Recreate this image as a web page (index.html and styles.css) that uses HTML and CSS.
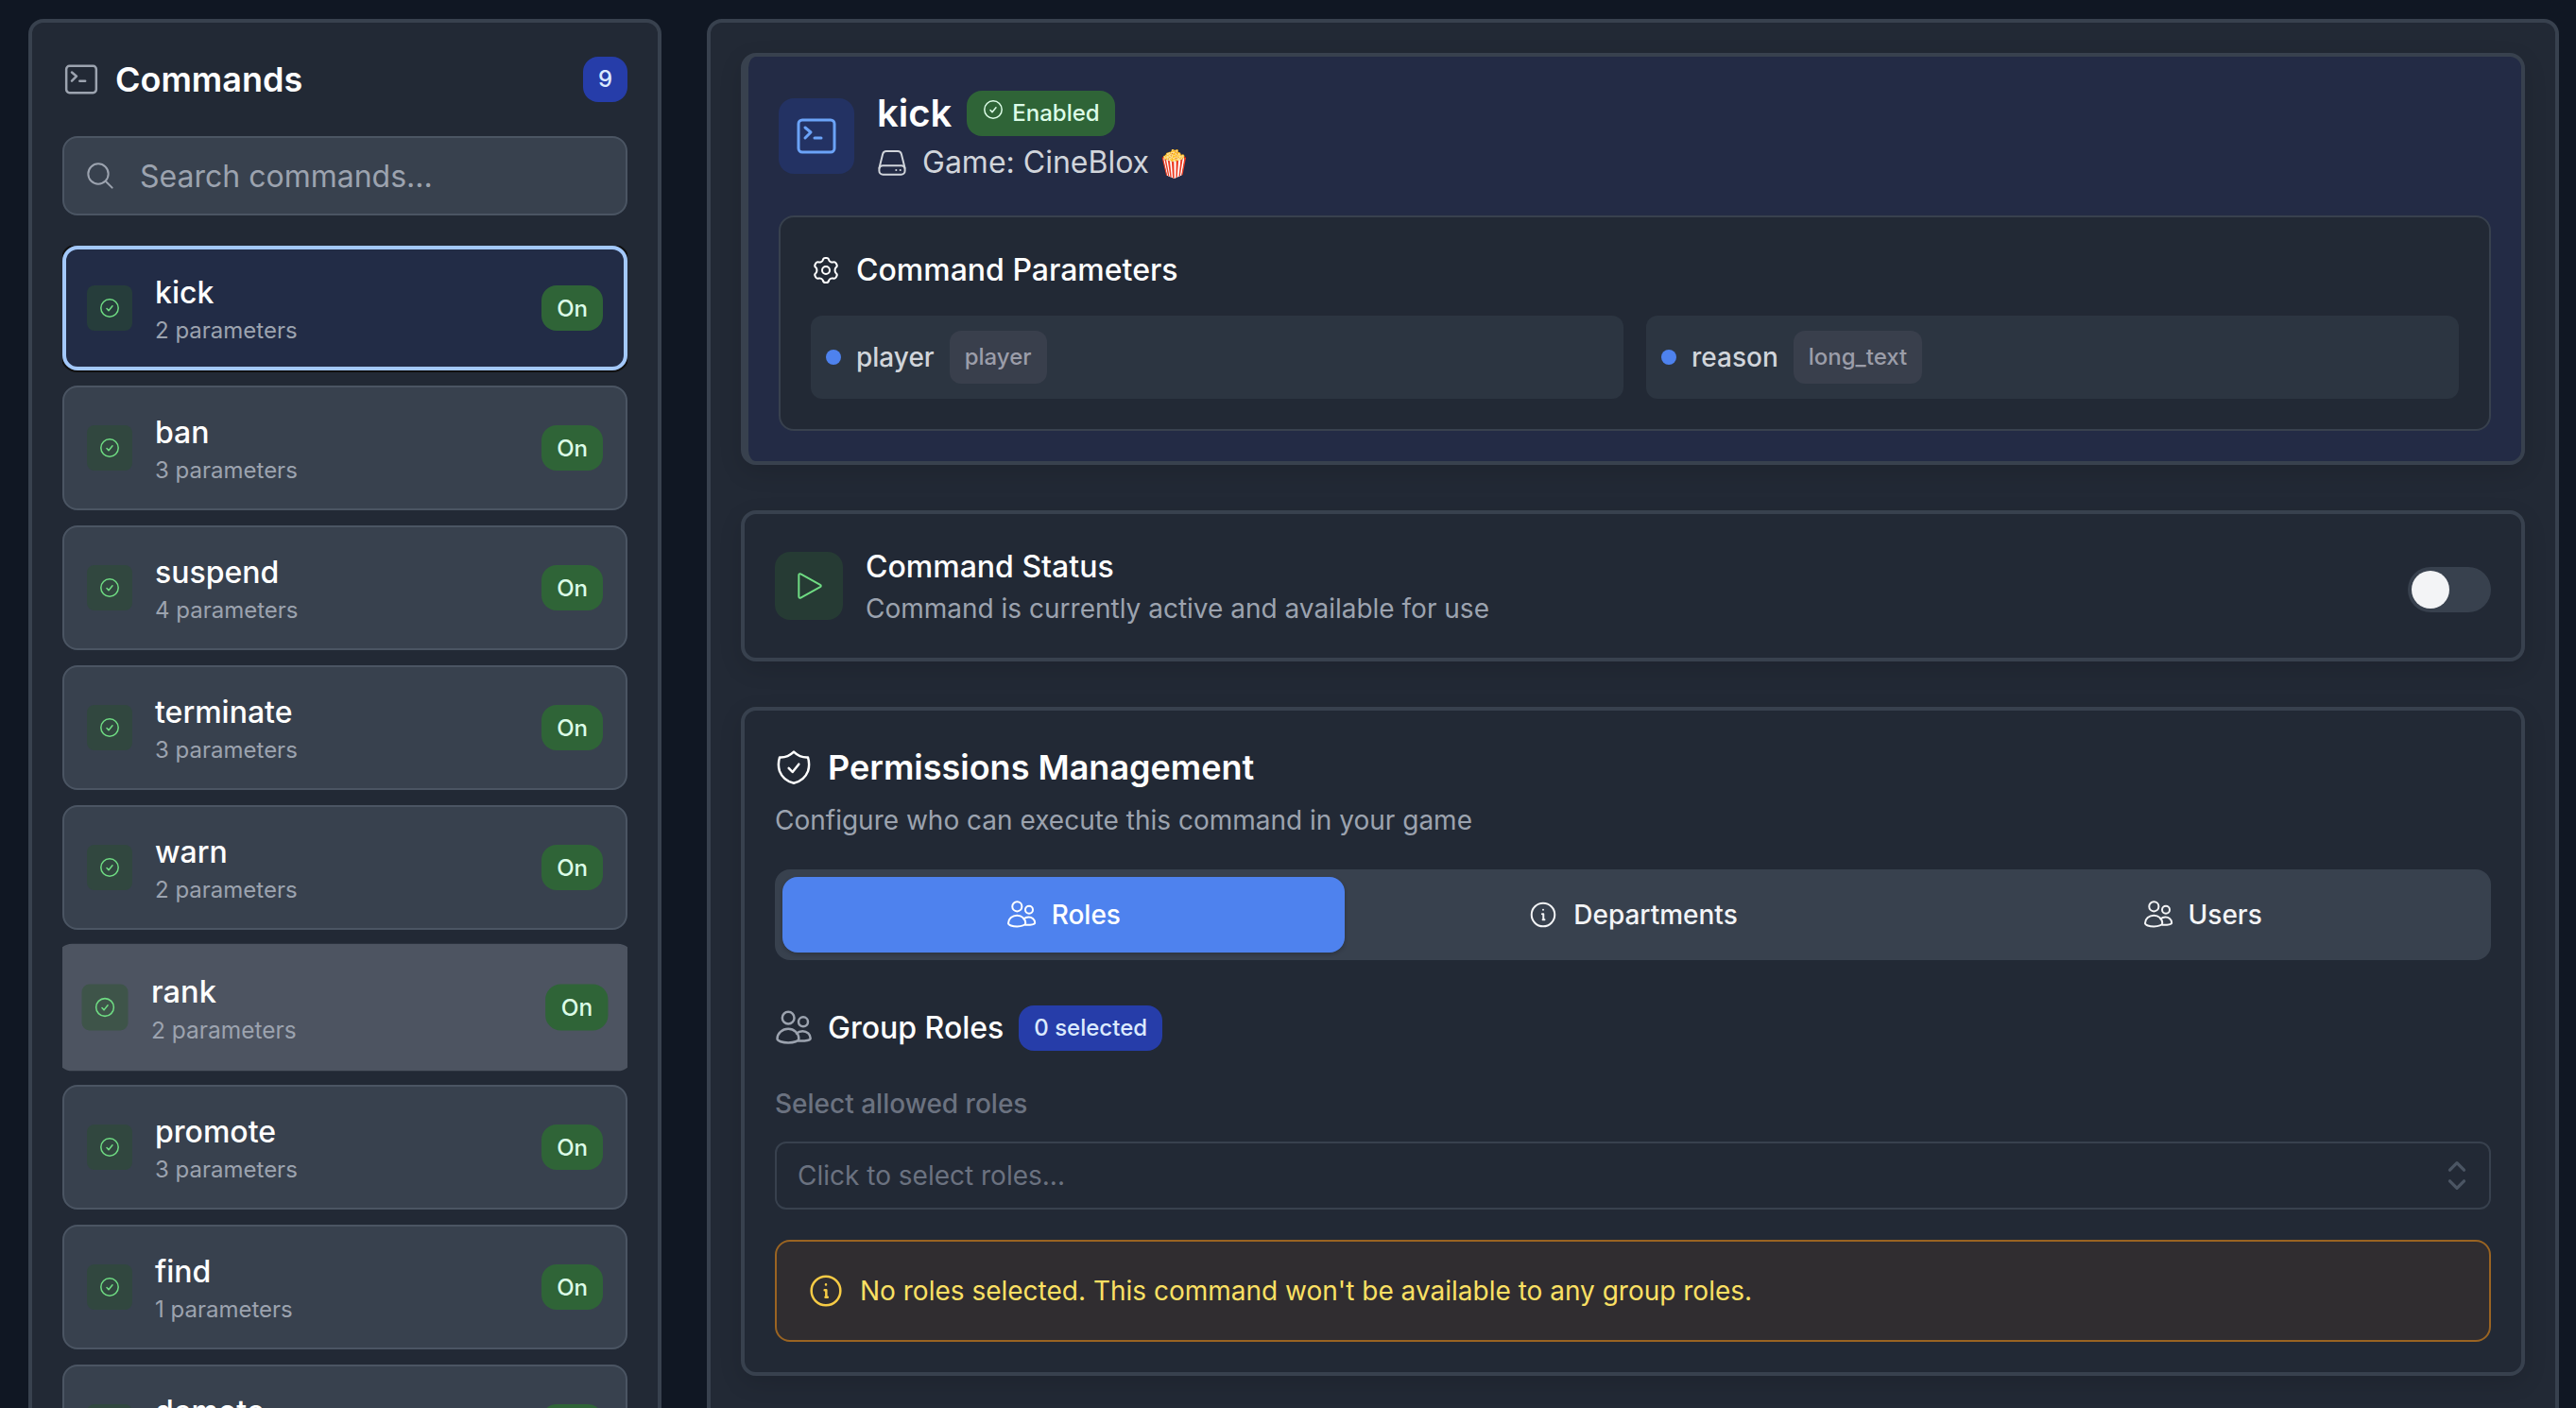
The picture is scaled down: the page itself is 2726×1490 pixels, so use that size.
FILE: index.html
```html
<!DOCTYPE html>
<html lang="en">
<head>
<meta charset="UTF-8">
<meta name="viewport" content="width=device-width, initial-scale=1.0">
<title>Commands</title>
<link rel="stylesheet" href="styles.css">
</head>
<body>

<!-- Icon sprite -->
<svg class="sprite" aria-hidden="true">
    <symbol id="i-terminal" viewBox="0 0 24 24"><rect x="2.5" y="3.5" width="19" height="17" rx="2"/><path d="M6 7.5l3 2.5-3 3M11 13h3.5"/></symbol>
    <symbol id="i-search" viewBox="0 0 24 24"><circle cx="10.5" cy="10.5" r="8"/><path d="M16.5 16.5l5 5"/></symbol>
    <symbol id="i-check" viewBox="0 0 24 24"><circle cx="12" cy="12" r="9.2"/><path d="M9 12.500l2 2.300 4-5"/></symbol>
    <symbol id="i-drive" viewBox="0 0 24 24"><path d="M1.800 16.500L4.600 5.200A3 3 0 0 1 7.500 3h9a3 3 0 0 1 2.900 2.200l2.800 11.300"/><rect x="1.800" y="14.500" width="20.400" height="7" rx="3"/><path d="M15.200 18h.1M18.500 18h.1"/></symbol>
    <symbol id="i-gear" viewBox="0 0 24 24"><circle cx="12" cy="12" r="3"/><path d="M9.600 3.900c.2-1 .9-1.700 1.900-1.700h1c1 0 1.700.7 1.900 1.700.1.700.7 1.200 1.300 1.500.6.300 1.300.4 1.900.2 1-.4 1.900 0 2.400.8l.5.900c.5.900.3 1.900-.5 2.500-.5.500-.8 1.100-.8 1.800v.8c0 .7.3 1.300.8 1.800.8.600 1 1.600.5 2.500l-.5.900c-.5.800-1.400 1.200-2.400.8-.6-.2-1.300-.1-1.900.2-.6.300-1.200.8-1.300 1.500-.2 1-.9 1.700-1.900 1.700h-1c-1 0-1.700-.7-1.900-1.700-.1-.7-.7-1.200-1.300-1.500-.6-.3-1.300-.4-1.900-.2-1 .4-1.900 0-2.400-.8l-.5-.9c-.5-.9-.3-1.900.5-2.500.5-.5.8-1.100.8-1.800v-.8c0-.7-.3-1.300-.8-1.800-.8-.6-1-1.600-.5-2.500l.5-.9c.5-.8 1.400-1.200 2.400-.8.600.2 1.300.1 1.900-.2.600-.3 1.200-.8 1.300-1.500z"/></symbol>
    <symbol id="i-play" viewBox="0 0 24 24"><path d="M4 3.500v17a1 1 0 0 0 1.500.9l15.500-8.500a1 1 0 0 0 0-1.800L5.500 2.600A1 1 0 0 0 4 3.500z"/></symbol>
    <symbol id="i-shield" viewBox="0 0 24 24"><path d="M12 2.200c2.500 2.400 5.700 3.700 9 3.500.9 3 .9 6 0 8.800-1.400 3.700-4.600 6.500-9 7.600-4.400-1.100-7.600-3.900-9-7.600-.9-2.800-.9-5.800 0-8.800 3.300.2 6.500-1.100 9-3.500z"/><path d="M8.800 12.500l2.400 2.500 4-5"/></symbol>
    <symbol id="i-users" viewBox="0 0 24 24"><circle cx="8.500" cy="5.500" r="3.800"/><circle cx="18" cy="8" r="3"/><path d="M8.500 12.500c3.700 0 6.700 2.800 6.700 6.300 0 1.400-3 2.500-6.700 2.500s-7-1.100-7-2.500c0-3.500 3.200-6.300 7-6.300z"/><path d="M13.800 15.400c1-1 2.300-1.500 3.800-1.500 2.800 0 5 2 5 4.500 0 1.200-2.800 1.900-7.600 1.700"/></symbol>
    <symbol id="i-info" viewBox="0 0 24 24"><circle cx="12" cy="12" r="9.2"/><path d="M12 8v.1M11.200 11.500h1v4.200M11.700 16h1.400"/></symbol>
    <symbol id="i-updown" viewBox="0 0 24 24"><path d="M7.500 8.500L12 4l4.500 4.500M7.500 15.500L12 20l4.500-4.500"/></symbol>
</svg>

<div class="page">

<aside class="panel sidebar">
    <div class="sidebar-header">
        <svg class="icon icon-lg muted"><use href="#i-terminal"/></svg>
        <h1>Commands</h1>
        <span class="badge badge-blue">9</span>
    </div>

    <div class="search">
        <svg class="icon"><use href="#i-search"/></svg>
        <input type="text" id="search" placeholder="Search commands..." aria-label="Search commands">
    </div>

    <div class="command-list" id="commandList"></div>
</aside>

<main class="panel content">
    <section class="card hero">
        <div class="hero-top">
            <div class="hero-icon"><svg class="icon icon-xl"><use href="#i-terminal"/></svg></div>
            <div>
                <div class="hero-title">
                    <h2>kick</h2>
                    <span class="badge badge-green"><svg class="icon icon-sm"><use href="#i-check"/></svg>Enabled</span>
                </div>
                <div class="hero-game"><svg class="icon"><use href="#i-drive"/></svg><span>Game: CineBlox <span class="emoji">🍿</span></span></div>
            </div>
        </div>
        <div class="params">
            <h3><svg class="icon"><use href="#i-gear"/></svg>Command Parameters</h3>
            <div class="params-grid">
                <div class="param"><span class="dot"></span>player<span class="param-type">player</span></div>
                <div class="param"><span class="dot"></span>reason<span class="param-type">long_text</span></div>
            </div>
        </div>
    </section>

    <section class="card status">
        <div class="status-icon"><svg class="icon"><use href="#i-play"/></svg></div>
        <div class="status-text">
            <h3><label for="enabled">Command Status</label></h3>
            <p>Command is currently active and available for use</p>
        </div>
        <input type="checkbox" class="switch" id="enabled" role="switch">
    </section>

    <section class="card permissions">
        <h2><svg class="icon icon-lg"><use href="#i-shield"/></svg>Permissions Management</h2>
        <p>Configure who can execute this command in your game</p>

        <div class="tabs" role="tablist">
            <button class="tab active" role="tab" aria-selected="true"><svg class="icon"><use href="#i-users"/></svg>Roles</button>
            <button class="tab" role="tab"><svg class="icon"><use href="#i-info"/></svg>Departments</button>
            <button class="tab" role="tab"><svg class="icon"><use href="#i-users"/></svg>Users</button>
        </div>

        <div class="group-header">
            <svg class="icon icon-lg muted"><use href="#i-users"/></svg>
            <h3>Group Roles</h3>
            <span class="badge badge-blue">0 selected</span>
        </div>

        <label class="field-label" for="roles">Select allowed roles</label>
        <div class="select-wrap">
            <select id="roles">
                <option>Click to select roles...</option>
            </select>
            <svg class="icon icon-lg"><use href="#i-updown"/></svg>
        </div>

        <div class="alert">
            <svg class="icon icon-lg"><use href="#i-info"/></svg>
            No roles selected. This command won't be available to any group roles.
        </div>
    </section>
</main>

</div>

<script>
const commands = [
    { name: 'kick', params: 2, state: 'selected' },
    { name: 'ban', params: 3 },
    { name: 'suspend', params: 4 },
    { name: 'terminate', params: 3 },
    { name: 'warn', params: 2 },
    { name: 'rank', params: 2, state: 'hovered' },
    { name: 'promote', params: 3 },
    { name: 'find', params: 1 },
    { name: 'demote', params: 3 }
];

document.getElementById('commandList').innerHTML = commands.map(cmd => `
    <button class="command ${cmd.state || ''}">
        <span class="command-icon"><svg class="icon icon-sm"><use href="#i-check"/></svg></span>
        <span class="command-text">
            <span class="command-name">${cmd.name}</span>
            <span class="command-params">${cmd.params} parameters</span>
        </span>
        <span class="badge badge-green">On</span>
    </button>`).join('');
</script>

</body>
</html>
```
FILE: styles.css
```css
* { box-sizing: border-box; }
body { margin: 0; height: 100vh; overflow: hidden; background: #101723; color: #fff; font-family: Inter, "Noto Color Emoji", sans-serif; font-size: 28px; line-height: 40px; }
h1, h2, h3, p { margin: 0; }
h1, h2 { font-size: 36px; line-height: 56px; font-weight: 600; }
h3 { font-size: 32px; line-height: 48px; font-weight: 500; }
p { color: #9ca3af; }
button, input, select { font-family: inherit; color: inherit; }

.sprite { position: absolute; width: 0; height: 0; }
.icon { width: 32px; height: 32px; flex: none; fill: none; stroke: currentColor; stroke-width: 1.5; stroke-linecap: round; stroke-linejoin: round; }
.icon-sm { width: 24px; height: 24px; }
.icon-lg { width: 40px; height: 40px; }
.icon-xl { width: 48px; height: 48px; }
.muted { color: #9ca3af; }

.page { display: flex; gap: 48px; padding: 20px 18px 0 30px; }
.panel { min-height: 100vh; padding: 32px; background: #222935; border: 4px solid #38414e; border-radius: 16px; }
.sidebar { flex: 0 0 670px; }
.content { flex: 1; min-width: 0; display: flex; flex-direction: column; gap: 48px; }

.badge { display: inline-flex; align-items: center; height: 48px; padding: 0 16px; border-radius: 16px; font-size: 24px; font-weight: 500; }
.badge-blue { background: #263da9; color: #dbeafe; }
.badge-green { background: #2f6437; color: #dcfce7; }

/* Sidebar */
.sidebar-header { display: flex; align-items: center; gap: 16px; margin-bottom: 32px; }
.sidebar-header .badge { margin-left: auto; }
.search { position: relative; margin-bottom: 32px; }
.search .icon { position: absolute; left: 24px; top: 26px; color: #9ca3af; }
.search input { display: block; width: 100%; height: 84px; padding: 0 24px 0 80px; font-size: 32px; background: #38414e; border: 2px solid #4b5563; border-radius: 16px; }
.search input::placeholder { color: #9ca3af; }
.command-list { display: flex; flex-direction: column; gap: 16px; overflow: hidden; }
.command { display: flex; align-items: center; gap: 24px; width: 100%; padding: 24px; background: #38414e; border: 2px solid #4b5563; border-radius: 16px; text-align: left; }
.command.selected { padding: 22px; background: #222c46; border: 4px solid #a3c8fa; box-shadow: 0 0 0 2px #101010; }
.command.hovered { background: #4d5461; border-color: #4d5461; transform: scale(1.02); }
.command-icon { display: flex; align-items: center; justify-content: center; width: 48px; height: 48px; border-radius: 8px; background: #31473f; color: #6fdc83; }
.selected .command-icon { background: #263d3b; }
.hovered .command-icon { background: #3e5449; }
.command-text { flex: 1; display: flex; flex-direction: column; }
.command-name { font-size: 32px; line-height: 48px; font-weight: 500; }
.command-params { font-size: 24px; line-height: 32px; color: #9ca3af; }

/* Cards */
.card { padding: 32px; border: 4px solid #38414e; border-radius: 16px; box-shadow: 0 8px 24px rgba(0, 0, 0, 0.12); }
.hero { background: #232b45; border-left-width: 8px; }
.hero-top { display: flex; align-items: center; gap: 24px; margin-bottom: 32px; }
.hero-icon { display: flex; align-items: center; justify-content: center; width: 80px; height: 80px; border-radius: 16px; background: #233263; color: #6ba3f8; }
.hero-title { display: flex; align-items: center; gap: 16px; }
.hero-title h2 { font-size: 40px; }
.hero-title .badge { gap: 8px; }
.hero-title .badge .icon { margin-bottom: 8px; }
.hero-game { display: flex; align-items: center; gap: 16px; font-size: 32px; line-height: 48px; color: #d1d5db; }
.emoji { font-size: 28px; line-height: 40px; }
.params { padding: 32px; background: #222935; border: 2px solid #38414e; border-radius: 16px; }
.params h3 { display: flex; align-items: center; gap: 16px; margin-bottom: 24px; }
.params-grid { display: grid; grid-template-columns: 1fr 1fr; gap: 24px; }
.param { display: flex; align-items: center; gap: 16px; padding: 16px; background: #2c3541; border-radius: 12px; color: #d1d5db; font-weight: 500; }
.dot { width: 16px; height: 16px; border-radius: 50%; background: #4e82ee; }
.param-type { padding: 8px 16px; background: #393f4c; border-radius: 12px; font-size: 24px; color: #9b9da9; }

.status { display: flex; align-items: center; gap: 24px; }
.status-icon { display: flex; align-items: center; justify-content: center; width: 72px; height: 72px; border-radius: 16px; background: #263b34; color: #6fdc83; }
.status-text { flex: 1; }
.switch { appearance: none; width: 88px; height: 48px; margin: 8px 0 0; padding: 4px; border-radius: 24px; background: #38414e; }
.switch::before { content: ""; display: block; width: 40px; height: 40px; border-radius: 50%; background: #f3f4f6; }
.switch:checked { background: #4e82ee; }
.switch:checked::before { margin-left: auto; }

.permissions h2 { display: flex; align-items: center; gap: 16px; margin-bottom: 8px; }
.tabs { display: grid; grid-template-columns: repeat(3, 1fr); gap: 8px; margin: 32px 0 48px; padding: 8px; background: #38414e; border-radius: 16px; }
.tab { display: flex; align-items: center; justify-content: center; gap: 16px; height: 80px; padding: 0; border: 0; border-radius: 16px; background: none; font-size: 28px; font-weight: 500; color: #f3f4f6; }
.tab.active { background: #4e82ee; color: #fff; box-shadow: 0 2px 4px rgba(0, 0, 0, 0.2); }
.group-header { display: flex; align-items: center; gap: 16px; margin-bottom: 32px; }
.field-label { display: block; margin-bottom: 16px; line-height: 48px; font-weight: 500; color: #6b7280; }
.select-wrap { position: relative; margin-bottom: 32px; }
.select-wrap select { appearance: none; display: block; width: 100%; height: 72px; padding: 0 22px; font-size: 28px; color: #6b7280; background: #222935; border: 2px solid #38414e; border-radius: 12px; }
.select-wrap .icon { position: absolute; right: 16px; top: 16px; color: #4b5563; stroke-width: 2; }
.alert { display: flex; align-items: center; gap: 16px; padding: 32px; background: #302d30; border: 2px solid #9a6422; border-radius: 16px; color: #fbe063; }
.alert .icon { color: #f7cb45; }
```
